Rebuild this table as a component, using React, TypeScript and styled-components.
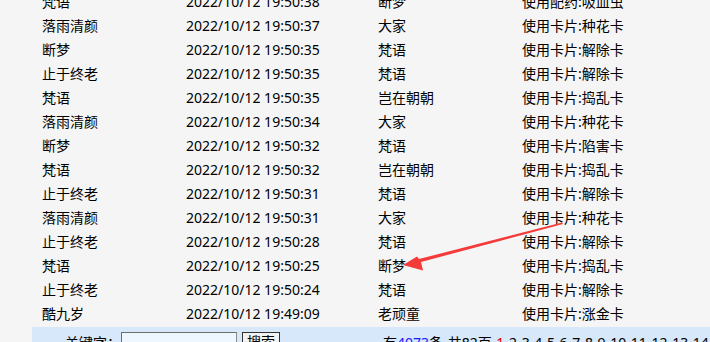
import React from "react";
import styled, { createGlobalStyle } from "styled-components";

const Global = createGlobalStyle`
  html, body { margin: 0; padding: 0; background: #f5f5f5; overflow: hidden; }
  body { font-family: "Noto Sans", "Noto Sans CJK SC", sans-serif; font-size: 14px; color: #000; }
`;

const Page = styled.div`
  position: relative;
  width: 710px;
  height: 342px;
  overflow: hidden;
  padding-left: 32px;
  box-sizing: border-box;
`;

const Table = styled.div`
  margin-top: -10px;
  display: flex;
  flex-direction: column;
`;

const Row = styled.div`
  display: grid;
  grid-template-columns: 144px 192px 144px 1fr;
  height: 24px;
  align-items: center;
  padding-left: 10px;
  white-space: nowrap;
`;

const Cell = styled.div`
  line-height: 24px;
`;

const Footer = styled.div`
  margin-top: 1px;
  height: 30px;
  width: 720px;
  background: #d6e8f9;
  display: grid;
  grid-template-columns: 351px 1fr;
  align-items: center;
  white-space: nowrap;
`;

const Search = styled.div`
  display: flex;
  align-items: center;
  padding-left: 33px;
`;

const Label = styled.span`
  width: 56px;
`;

const Input = styled.input`
  width: 116px;
  height: 20px;
  box-sizing: border-box;
  border: 1px solid #8a8a8a;
  border-top-color: #6d6d6d;
  border-left-color: #6d6d6d;
  background: #eef6ff;
  padding: 0;
  margin: 0;
`;

const Button = styled.button`
  margin-left: 5px;
  width: 38px;
  height: 20px;
  box-sizing: border-box;
  border: 1px solid #333;
  background: #f2f2f2;
  font-family: inherit;
  font-size: 14px;
  padding: 0;
  line-height: 18px;
  color: #000;
`;

const Pager = styled.div`
  word-spacing: 1px;
`;

const Blue = styled.span`
  color: #1a1aff;
`;

const Red = styled.span`
  color: #e60000;
`;

const Arrow = styled.svg`
  position: absolute;
  left: 0;
  top: 0;
  pointer-events: none;
`;

const rows: [string, string, string, string][] = [
  ["梵语", "2022/10/12 19:50:38", "断梦", "使用配药:吸血虫"],
  ["落雨清颜", "2022/10/12 19:50:37", "大家", "使用卡片:种花卡"],
  ["断梦", "2022/10/12 19:50:35", "梵语", "使用卡片:解除卡"],
  ["止于终老", "2022/10/12 19:50:35", "梵语", "使用卡片:解除卡"],
  ["梵语", "2022/10/12 19:50:35", "岂在朝朝", "使用卡片:捣乱卡"],
  ["落雨清颜", "2022/10/12 19:50:34", "大家", "使用卡片:种花卡"],
  ["断梦", "2022/10/12 19:50:32", "梵语", "使用卡片:陷害卡"],
  ["梵语", "2022/10/12 19:50:32", "岂在朝朝", "使用卡片:捣乱卡"],
  ["止于终老", "2022/10/12 19:50:31", "梵语", "使用卡片:解除卡"],
  ["落雨清颜", "2022/10/12 19:50:31", "大家", "使用卡片:种花卡"],
  ["止于终老", "2022/10/12 19:50:28", "梵语", "使用卡片:解除卡"],
  ["梵语", "2022/10/12 19:50:25", "断梦", "使用卡片:捣乱卡"],
  ["止于终老", "2022/10/12 19:50:24", "梵语", "使用卡片:解除卡"],
  ["酷九岁", "2022/10/12 19:49:09", "老顽童", "使用卡片:涨金卡"],
];

export default function App() {
  return (
    <>
      <Global />
      <Page>
        <Table>
          {rows.map((r, i) => (
            <Row key={i}>
              {r.map((c, j) => (
                <Cell key={j}>{c}</Cell>
              ))}
            </Row>
          ))}
        </Table>
        <Footer>
          <Search>
            <Label>关键字：</Label>
            <Input />
            <Button>搜索</Button>
          </Search>
          <Pager>
            有<Blue>4073</Blue>条 共82页 <Red>1</Red> 2 3 4 5 6 7 8 9 10 11 12 13 14 15 16
          </Pager>
        </Footer>
        <Arrow width="710" height="342" viewBox="0 0 710 342">
          <polygon points="562,222.5 563,224 421,262 423,270.5 403,265 417,256.5 419,259" fill="#f53a3a" />
        </Arrow>
      </Page>
    </>
  );
}
